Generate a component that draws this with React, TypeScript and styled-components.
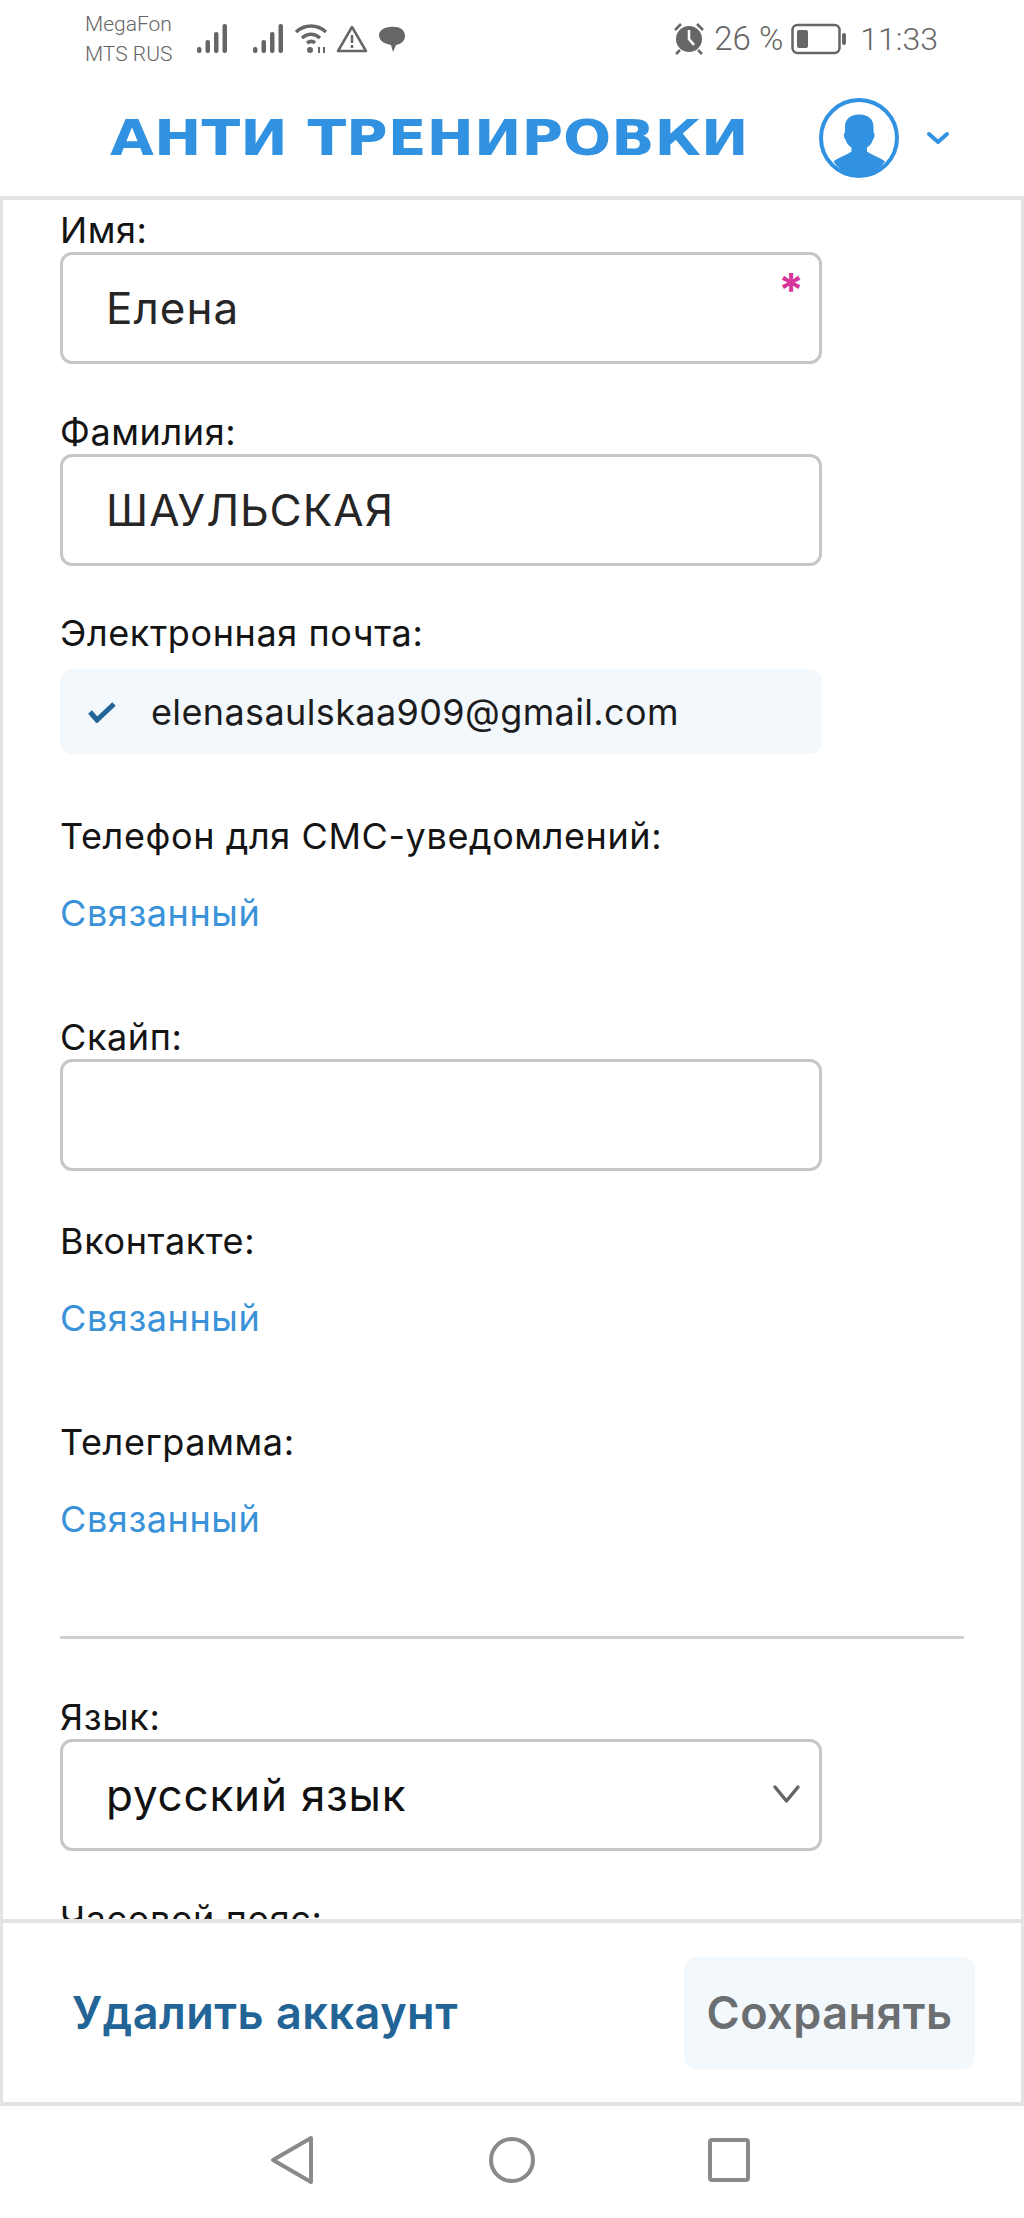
import styled, { createGlobalStyle } from 'styled-components';

const GlobalStyle = createGlobalStyle`
  html, body {
    margin: 0;
    padding: 0;
    background: #ffffff;
  }
  * {
    box-sizing: border-box;
  }
`;

const Screen = styled.div`
  width: 1024px;
  height: 2218px;
  display: flex;
  flex-direction: column;
  background: #fff;
  font-family: Inter, "Liberation Sans", sans-serif;
  color: #1c1c1c;
  overflow: hidden;
`;

const StatusBar = styled.div`
  height: 80px;
  flex: none;
  padding: 17px 86px 0 85px;
  display: flex;
  justify-content: space-between;
  align-items: flex-start;
  color: #666;
  font-family: Roboto, sans-serif;
  font-weight: 300;
`;

const StatusGroup = styled.div`
  display: flex;
  align-items: center;
  height: 44px;
`;

const Carriers = styled.div`
  width: 112px;
  font-size: 21px;
  line-height: 30px;
  flex: none;
`;

const StatusIcon = styled.svg<{ $left?: number }>`
  flex: none;
  margin-left: ${({ $left }) => $left ?? 0}px;
`;

const StatusText = styled.span<{ $left?: number; $right?: number; $size: number }>`
  font-size: ${({ $size }) => $size}px;
  line-height: 42px;
  white-space: nowrap;
  margin-left: ${({ $left }) => $left ?? 0}px;
  margin-right: ${({ $right }) => $right ?? 0}px;
`;

const Header = styled.header`
  height: 116px;
  flex: none;
  display: flex;
  align-items: center;
  padding-left: 110px;
  color: #3092e0;
`;

const Logo = styled.div`
  width: 637px;
  font-family: "DejaVu Sans", sans-serif;
  font-weight: 700;
  font-size: 50px;
  line-height: 1;
  white-space: nowrap;
  transform-origin: left center;
  transform: scaleX(1.135);
`;

const Avatar = styled.svg`
  width: 80px;
  height: 80px;
  margin-left: 72px;
  flex: none;
`;

const Caret = styled.svg`
  width: 22px;
  height: 14px;
  margin-left: 28px;
  flex: none;
`;

const Content = styled.main`
  flex: 1;
  min-height: 0;
  overflow: hidden;
  border: solid #e3e3e3;
  border-width: 4px 3px 0;
  padding: 10px 57px 0;
`;

const Field = styled.div<{ $bottom: number }>`
  margin-bottom: ${({ $bottom }) => $bottom}px;
`;

const Label = styled.div`
  font-size: 36px;
  letter-spacing: 0.6px;
  line-height: 40px;
  color: #141414;
`;

const InputBox = styled.div<{ $dark?: boolean }>`
  position: relative;
  width: 762px;
  height: 112px;
  margin-top: 2px;
  border: 3px solid #c6c6c6;
  border-radius: 12px;
  padding-left: 43px;
  display: flex;
  align-items: center;
  font-size: 44px;
  letter-spacing: ${({ $dark }) => ($dark ? '0.8px' : '1px')};
  color: ${({ $dark }) => ($dark ? '#111' : '#262626')};
`;

const Required = styled.span`
  position: absolute;
  top: 12px;
  right: 14px;
  font-size: 46px;
  font-weight: 700;
  line-height: 1;
  color: #d6359b;
`;

const Chevron = styled.svg`
  position: absolute;
  right: 18px;
  top: 42px;
  width: 29px;
  height: 20px;
`;

const EmailBox = styled.div`
  width: 762px;
  height: 85px;
  margin-top: 16px;
  background: #f3f8fc;
  border-radius: 12px;
  padding-left: 28px;
  display: flex;
  align-items: center;
  gap: 35px;
  font-size: 36px;
  letter-spacing: 0.38px;
  color: #1c1c1c;
`;

const LinkedText = styled.div`
  margin-top: 37px;
  font-size: 36px;
  letter-spacing: 0.6px;
  line-height: 40px;
  color: #3a92d8;
`;

const Divider = styled.hr`
  width: 904px;
  height: 3px;
  margin: 0 0 58px;
  border: 0;
  background: #d0d0d0;
`;

const Footer = styled.footer`
  height: 187px;
  flex: none;
  display: flex;
  align-items: center;
  justify-content: space-between;
  border: solid #e3e3e3;
  border-width: 4px 3px;
  padding: 0 46px 0 69px;
`;

const DeleteLink = styled.span`
  font-size: 45px;
  letter-spacing: 0.5px;
  font-weight: 600;
  color: #236496;
`;

const SaveButton = styled.div`
  width: 291px;
  height: 112px;
  background: #f3f8fc;
  border-radius: 12px;
  display: flex;
  align-items: center;
  justify-content: center;
  font-size: 45px;
  letter-spacing: 0.5px;
  font-weight: 600;
  color: #6c6f72;
`;

const NavBar = styled.nav`
  height: 112px;
  flex: none;
  display: flex;
  align-items: center;
  justify-content: center;
  gap: 170px;
  padding-bottom: 5px;
`;

const NavIcon = styled.svg`
  width: 48px;
  height: 48px;
  fill: none;
  stroke: #8a8a8a;
  stroke-width: 4;
  stroke-linejoin: round;
`;

const Signal = ({ left }: { left?: number }) => (
  <StatusIcon $left={left} width="32" height="30" viewBox="0 0 32 30" fill="#666">
    <rect x="0" y="23" width="4.5" height="6" rx="2" />
    <rect x="8.5" y="16" width="4.5" height="13" rx="2" />
    <rect x="17" y="8" width="4.5" height="21" rx="2" />
    <rect x="25.5" y="0" width="4.5" height="29" rx="2" />
  </StatusIcon>
);

export default function App() {
  return (
    <>
      <GlobalStyle />
      <Screen>
        <StatusBar>
          <StatusGroup>
            <Carriers>
              MegaFon
              <br />
              MTS RUS
            </Carriers>
            <Signal />
            <Signal left={24} />
            <StatusIcon $left={9} width="36" height="32" viewBox="0 0 36 32" fill="none" stroke="#666" strokeWidth="3.5">
              <path d="M2 9C11 1 23 1 32 9" />
              <path d="M8 15c6-5 12-5 18 0" />
              <path d="M13 20c3-2 6-2 8 0" />
              <circle cx="16" cy="27" r="3" fill="#666" stroke="none" />
              <path d="M25 24v6M30 24v6" strokeWidth="2" />
            </StatusIcon>
            <StatusIcon $left={6} width="32" height="30" viewBox="0 0 32 30" fill="none" stroke="#666" strokeWidth="2.5">
              <path d="M16 3 30 27H2Z" strokeLinejoin="round" />
              <path d="M16 11v8M16 21v3" />
            </StatusIcon>
            <StatusIcon $left={10} width="28" height="30" viewBox="0 0 28 30" fill="#666">
              <path d="M12 3c8-1 15 2 15 9 0 5-4 8-9 9l-3 7-2-7C7 20 1 17 1 11 1 7 6 3 12 3Z" />
            </StatusIcon>
          </StatusGroup>
          <StatusGroup>
            <StatusIcon width="30" height="32" viewBox="1 1 30 32" fill="#666">
              <circle cx="16" cy="17" r="13" />
              <path d="M2 8 8 2M30 8l-6-6M7 28l-4 4M25 28l4 4" stroke="#666" strokeWidth="2.5" />
              <path d="M16 8v9l5 6" stroke="#fff" strokeWidth="2.5" fill="none" />
            </StatusIcon>
            <StatusText $left={10} $right={8} $size={33}>26 %</StatusText>
            <StatusIcon width="55" height="32" viewBox="0 0 55 32" fill="none">
              <rect x="1.5" y="2" width="47" height="28" rx="5" stroke="#666" strokeWidth="2.5" />
              <rect x="6" y="7" width="11" height="18" rx="2" fill="#666" />
              <rect x="51" y="10" width="4" height="12" rx="2" fill="#666" />
            </StatusIcon>
            <StatusText $left={14} $size={32}>11:33</StatusText>
          </StatusGroup>
        </StatusBar>

        <Header>
          <Logo>АНТИ ТРЕНИРОВКИ</Logo>
          <Avatar viewBox="0 0 80 80">
            <circle cx="40" cy="40" r="38" fill="#fff" stroke="#3092e0" strokeWidth="4" />
            <path
              fill="#3092e0"
              d="M40 16.500c-9 0-14 5-14 12v6c-1.500 0-1.500 5 .5 7 1 3 2.500 6 6 8v4c-5 4-12 5-18 10 6 9 16 15 25.500 15s20-6 26-15c-6-5-13-6-18-10v-4c3.500-2 5-5 6-8 2-2 2-7 .5-7v-6c0-7-5-12-14-12Z"
            />
          </Avatar>
          <Caret viewBox="0 0 22 14" fill="none" stroke="#3092e0" strokeWidth="4" strokeLinecap="round" strokeLinejoin="round">
            <path d="M2 3l9 8 9-8" />
          </Caret>
        </Header>

        <Content>
          <Field $bottom={48}>
            <Label>Имя:</Label>
            <InputBox>
              Елена
              <Required>*</Required>
            </InputBox>
          </Field>
          <Field $bottom={47}>
            <Label>Фамилия:</Label>
            <InputBox>ШАУЛЬСКАЯ</InputBox>
          </Field>
          <Field $bottom={62}>
            <Label>Электронная почта:</Label>
            <EmailBox>
              <svg width="28" height="22" viewBox="0 0 28 22" fill="none" stroke="#236496" strokeWidth="5">
                <path d="M2 11l7 8L26 3" />
              </svg>
              elenasaulskaa909@gmail.com
            </EmailBox>
          </Field>
          <Field $bottom={84}>
            <Label>Телефон для СМС-уведомлений:</Label>
            <LinkedText>Связанный</LinkedText>
          </Field>
          <Field $bottom={50}>
            <Label>Скайп:</Label>
            <InputBox />
          </Field>
          <Field $bottom={84}>
            <Label>Вконтакте:</Label>
            <LinkedText>Связанный</LinkedText>
          </Field>
          <Field $bottom={97}>
            <Label>Телеграмма:</Label>
            <LinkedText>Связанный</LinkedText>
          </Field>
          <Divider />
          <Field $bottom={48}>
            <Label>Язык:</Label>
            <InputBox $dark>
              русский язык
              <Chevron viewBox="0 0 29 20" fill="none" stroke="#666" strokeWidth="3.5" strokeLinecap="round" strokeLinejoin="round">
                <path d="M3 3l11.500 14L26 3" />
              </Chevron>
            </InputBox>
          </Field>
          <Label>Часовой пояс:</Label>
        </Content>

        <Footer>
          <DeleteLink>Удалить аккаунт</DeleteLink>
          <SaveButton>Сохранять</SaveButton>
        </Footer>

        <NavBar>
          <NavIcon viewBox="0 0 48 48">
            <path d="M41 2 3 24l38 22Z" />
          </NavIcon>
          <NavIcon viewBox="0 0 48 48">
            <circle cx="24" cy="24" r="21" />
          </NavIcon>
          <NavIcon viewBox="0 0 48 48">
            <rect x="4" y="4" width="38" height="40" rx="2" />
          </NavIcon>
        </NavBar>
      </Screen>
    </>
  );
}
